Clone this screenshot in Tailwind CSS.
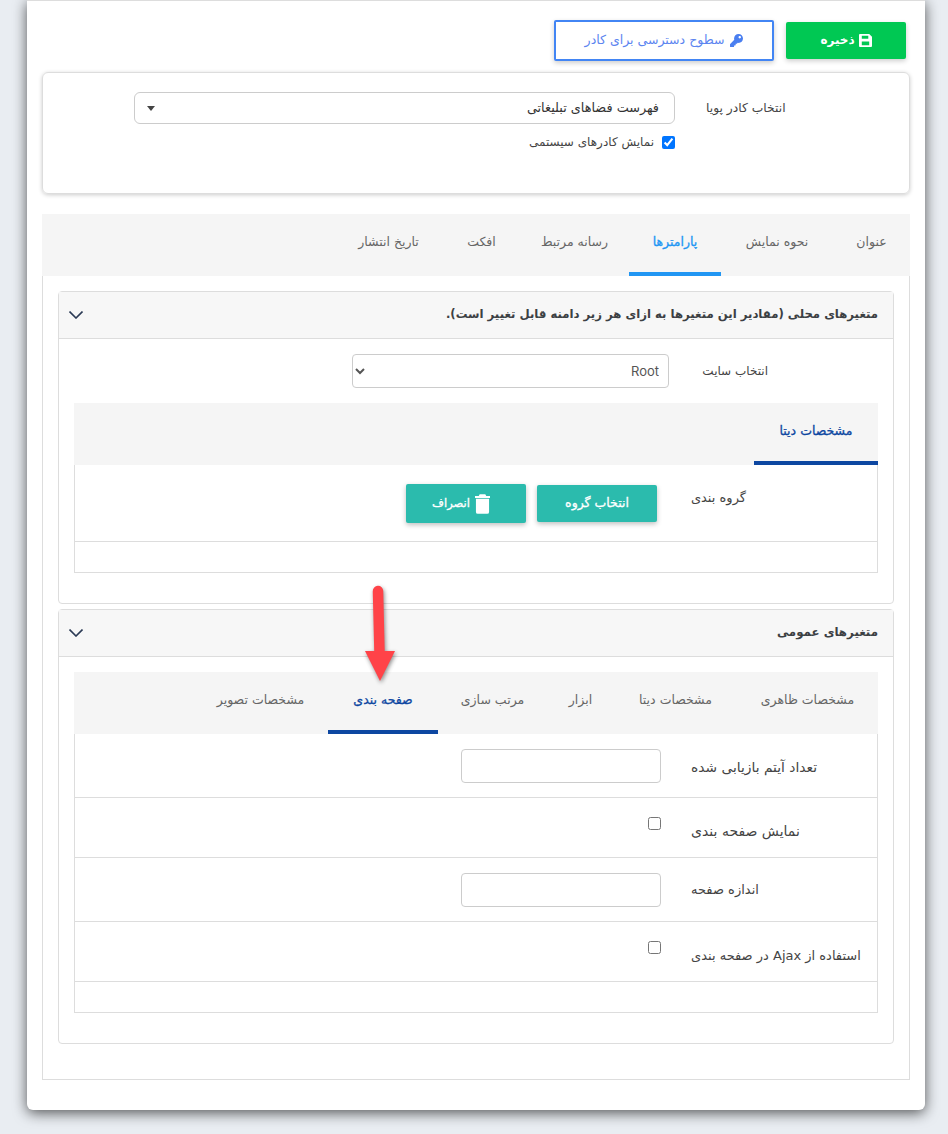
<!DOCTYPE html>
<html lang="fa" dir="rtl">
<head>
  <meta charset="UTF-8">
  <title>Frame settings</title>
  <script src="https://cdn.jsdelivr.net/npm/@tailwindcss/browser@4"></script>
</head>
<body class="bg-[#e9edf2] h-[1134px] overflow-hidden font-['DejaVu_Sans',sans-serif] text-[12px] text-[#444]">

  <!-- main card -->
  <div class="relative mr-[23px] w-[898px] h-[1110px] bg-white border-t border-[#ddd] rounded-b-[6px] shadow-[0_3px_14px_rgba(0,0,0,0.65)] px-[15px]">

    <!-- top buttons -->
    <div class="flex items-center gap-[12px] pr-[4px] pt-[17px] h-[71px] pb-[10px]">
      <button class="w-[120px] h-[37px] bg-[#00c853] text-white font-bold rounded-[2px] shadow-[0_2px_5px_rgba(0,0,0,0.2)] flex items-center justify-center gap-[4px]">
        <svg class="w-[13px] h-[13px]" viewBox="0 0 14 14"><path fill="#fff" fill-rule="evenodd" d="M1 0h10l3 3v10a1 1 0 0 1-1 1H1a1 1 0 0 1-1-1V1a1 1 0 0 1 1-1zM3 2v3h7V2zM3 8v4h8V8z"/></svg>
        <span>ذخیره</span>
      </button>
      <button class="w-[220px] h-[41px] bg-white border-2 border-[#4285f4] text-[#5c85f0] text-[12.500px] rounded-[2px] shadow-[0_2px_5px_rgba(0,0,0,0.2)] flex items-center justify-center gap-[6px]">
        <svg class="w-[13px] h-[13px]" viewBox="0 0 512 512"><path fill="#4a7ff0" d="M512 176.001C512 273.203 433.202 352 336 352c-11.22 0-22.19-1.062-32.827-3.069l-24.012 27.014A23.999 23.999 0 0 1 261.223 384H224v40c0 13.255-10.745 24-24 24h-40v40c0 13.255-10.745 24-24 24H24c-13.255 0-24-10.745-24-24v-78.059c0-6.365 2.529-12.47 7.029-16.971l161.802-161.802C163.108 213.814 160 195.271 160 176 160 78.798 238.797.001 335.999 0 433.488-.001 512 78.511 512 176.001zM336 128c0 26.51 21.49 48 48 48s48-21.49 48-48-21.49-48-48-48-48 21.49-48 48z"/></svg>
        <span>سطوح دسترسی برای کادر</span>
      </button>
    </div>

    <!-- frame picker panel -->
    <div class="h-[122px] border border-[#ddd] rounded-[6px] shadow-[0_1px_4px_rgba(0,0,0,0.2)] pt-[19px] pr-[123px]">
      <div class="flex items-center gap-[31px] h-[32px]" dir="ltr">
        <div class="w-[541px] h-[32px] ml-[91px] border border-[#ccc] rounded-[6px] flex items-center justify-between pl-[12px] pr-[15px]">
          <svg class="w-[8px] h-[5px]" viewBox="0 0 8 5"><path fill="#444" d="M0 0h8L4 5z"/></svg>
          <span dir="rtl" class="text-[#333] text-[12.800px]">فهرست فضاهای تبلیغاتی</span>
        </div>
        <span dir="rtl" class="w-[80px] text-left text-[12.300px] whitespace-nowrap">انتخاب کادر پویا</span>
      </div>
      <label class="flex items-center gap-[8px] mt-[9px] mr-[111px]">
        <input type="checkbox" checked class="w-[13px] h-[13px]">
        <span>نمایش کادرهای سیستمی</span>
      </label>
    </div>

    <!-- main tabs -->
    <div class="mt-[20px] h-[62px] bg-[#f5f5f5] flex text-[#666] text-[12.500px]">
      <div class="w-[77px] h-full flex items-center justify-center pb-[6px]">عنوان</div>
      <div class="w-[112px] h-full flex items-center justify-center pb-[6px]">نحوه نمایش</div>
      <div class="w-[92px] h-full flex items-center justify-center pb-[2px] text-[#2196f3] [-webkit-text-stroke:0.3px_#2196f3] border-b-[4px] border-[#2196f3]">پارامترها</div>
      <div class="w-[109px] h-full flex items-center justify-center pb-[6px]">رسانه مرتبط</div>
      <div class="w-[77px] h-full flex items-center justify-center pb-[6px]">افکت</div>
      <div class="w-[109px] h-full flex items-center justify-center pb-[6px]">تاریخ انتشار</div>
    </div>

    <div class="h-[804px] border border-t-0 border-[#ddd] px-[15px] pt-[15px]">

      <!-- local vars -->
      <div class="h-[313px] border border-[#ddd] rounded-[4px]">
        <div class="h-[47px] bg-[#f7f7f7] border-b border-[#ddd] flex items-center justify-between pr-[15px] pl-[10px]">
          <span class="font-bold text-[11.700px] text-[#3c4043]">متغیرهای محلی (مقادیر این متغیرها به ازای هر زیر دامنه قابل تغییر است).</span>
          <svg class="w-[14px] h-[8px]" viewBox="0 0 14 8"><path fill="none" stroke="#2b3a55" stroke-width="1.6" d="M.5.5 7 7 13.5.5"/></svg>
        </div>
        <div class="px-[15px]">
          <div class="flex items-center h-[64px]" dir="ltr">
            <select dir="rtl" class="ml-[278px] w-[317px] h-[34px] bg-white border border-[#ccc] rounded-[4px] pr-[5px] pl-[8px] font-['Inter',sans-serif] text-[13px] text-[#555]"><option>Root</option></select>
            <span dir="rtl" class="ml-[39px] w-[60px] text-left whitespace-nowrap">انتخاب سایت</span>
          </div>
          <div class="h-[62px] bg-[#f5f5f5] flex">
            <div class="w-[124px] h-full flex items-center justify-center pb-[2px] text-[12.500px] text-[#0d47a1] [-webkit-text-stroke:0.3px_#0d47a1] border-b-[4px] border-[#0d47a1]">مشخصات دیتا</div>
          </div>
          <div class="h-[108px] border border-t-0 border-[#ddd]">
            <div class="h-[77px] border-b border-[#ddd] flex pr-[131px]">
              <div class="w-[55px] pt-[23px] text-[13px] whitespace-nowrap">گروه بندی</div>
              <div class="flex items-start gap-[11px] mr-[34px] pt-[20px]">
                <button class="w-[120px] h-[37px] bg-[#2bbbad] text-white text-[12.500px] [-webkit-text-stroke:0.3px_#fff] rounded-[2px] shadow-[0_2px_5px_rgba(0,0,0,0.25)]">انتخاب گروه</button>
                <button class="-mt-[1px] w-[120px] h-[39px] pr-[10px] bg-[#2bbbad] text-white text-[11.500px] [-webkit-text-stroke:0.3px_#fff] rounded-[2px] shadow-[0_2px_5px_rgba(0,0,0,0.25)] flex items-center justify-center gap-[5px]">
                  <svg class="w-[15px] h-[20px]" viewBox="0 0 16 21"><path fill="#fff" d="M5 0h6l1 2h4v2H0V2h4zM1 5h14v14a2 2 0 0 1-2 2H3a2 2 0 0 1-2-2z"/></svg>
                  <span>انصراف</span>
                </button>
              </div>
            </div>
          </div>
        </div>
      </div>

      <!-- general vars -->
      <div class="mt-[5px] h-[435px] border border-[#ddd] rounded-[4px]">
        <div class="h-[47px] bg-[#f7f7f7] border-b border-[#ddd] flex items-center justify-between pr-[15px] pl-[10px]">
          <span class="font-bold text-[11.800px] text-[#3c4043]">متغیرهای عمومی</span>
          <svg class="w-[14px] h-[8px]" viewBox="0 0 14 8"><path fill="none" stroke="#2b3a55" stroke-width="1.6" d="M.5.5 7 7 13.5.5"/></svg>
        </div>
        <div class="px-[15px] pt-[15px]">
          <div class="h-[62px] bg-[#f5f5f5] flex text-[#666] text-[12.500px]">
            <div class="w-[141px] h-full flex items-center justify-center pb-[6px]">مشخصات ظاهری</div>
            <div class="w-[123px] h-full flex items-center justify-center pb-[6px]">مشخصات دیتا</div>
            <div class="w-[67px] h-full flex items-center justify-center pb-[6px]">ابزار</div>
            <div class="w-[109px] h-full flex items-center justify-center pb-[6px]">مرتب سازی</div>
            <div class="w-[110px] h-full flex items-center justify-center pb-[2px] text-[#0d47a1] [-webkit-text-stroke:0.3px_#0d47a1] border-b-[4px] border-[#0d47a1]">صفحه بندی</div>
            <div class="w-[135px] h-full flex items-center justify-center pb-[6px]">مشخصات تصویر</div>
          </div>
          <div class="border border-t-0 border-[#ddd] h-[279px]" dir="ltr">
            <div class="h-[64px] border-b border-[#ddd] flex items-center pl-[386px]">
              <input class="w-[200px] h-[34px] border border-[#ccc] rounded-[4px]">
              <span dir="rtl" class="ml-[30px] mt-[3px] text-[13.800px]">تعداد آیتم بازیابی شده</span>
            </div>
            <div class="h-[60px] border-b border-[#ddd] flex pl-[573px]">
              <input type="checkbox" class="w-[13px] h-[13px] mt-[19px]">
              <span dir="rtl" class="ml-[30px] mt-[23px] text-[14px]">نمایش صفحه بندی</span>
            </div>
            <div class="h-[64px] border-b border-[#ddd] flex items-center pl-[386px]">
              <input class="w-[200px] h-[34px] border border-[#ccc] rounded-[4px]">
              <span dir="rtl" class="ml-[30px] text-[13px]">اندازه صفحه</span>
            </div>
            <div class="h-[60px] border-b border-[#ddd] flex pl-[573px]">
              <input type="checkbox" class="w-[13px] h-[13px] mt-[19px]">
              <span dir="rtl" class="ml-[30px] mt-[24px] text-[13px]">استفاده از Ajax در صفحه بندی</span>
            </div>
          </div>
        </div>
      </div>
    </div>

    <!-- red arrow annotation -->
    <svg class="absolute left-[303px] top-[580px] w-[80px] h-[110px] drop-shadow-[1px_2px_2px_rgba(0,0,0,0.45)]" viewBox="0 0 80 110">
      <path fill="none" stroke="#ff4348" stroke-width="10.500" stroke-linecap="round" d="M48 10l1.500 62"/>
      <path fill="#ff4348" d="M35 70h30L50 100z"/>
    </svg>
  </div>
</body>
</html>
